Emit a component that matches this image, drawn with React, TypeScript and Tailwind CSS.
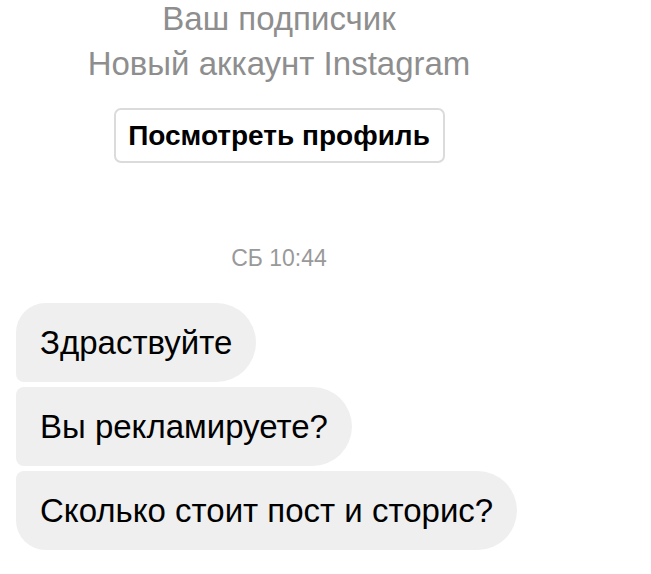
const messages = ['Здраствуйте', 'Вы рекламируете?', 'Сколько стоит пост и сторис?'];

function bubbleRadius(i: number, n: number) {
    if (i === 0) return 'rounded-r-[40px] rounded-tl-[30px] rounded-bl-[8px]';
    if (i === n - 1) return 'rounded-r-[40px] rounded-tl-[8px] rounded-bl-[30px]';
    return 'rounded-r-[40px] rounded-l-[8px]';
}

export default function App() {
    return (
        <div className="w-[651px] h-[574px] bg-white overflow-hidden" style={{ fontFamily: '"Liberation Sans", Arial, sans-serif' }}>
            <div className="w-[558px] flex flex-col items-center">
                <div className="text-[33px] leading-[36px] text-[#8e8e8e] mt-[1px]">Ваш подписчик</div>
                <div className="text-[33px] leading-[36px] text-[#8e8e8e] mt-[9px]">Новый аккаунт Instagram</div>
                <button className="mt-[26px] h-[55px] w-[331px] rounded-[7px] border-2 border-[#dbdbdb] text-[28px] font-bold text-black">
                    Посмотреть профиль
                </button>
                <div className="mt-[83px] text-[23px] leading-[24px] text-[#999999]">СБ 10:44</div>
            </div>
            <div className="mt-[33px] pl-[16px] flex flex-col items-start gap-[5px]">
                {messages.map((m, i) => (
                    <div key={i} className={`h-[79px] flex items-center pl-[24px] pr-[24px] bg-[#efefef] text-[33px] text-black ${bubbleRadius(i, messages.length)}`}>
                        {m}
                    </div>
                ))}
            </div>
        </div>
    );
}
